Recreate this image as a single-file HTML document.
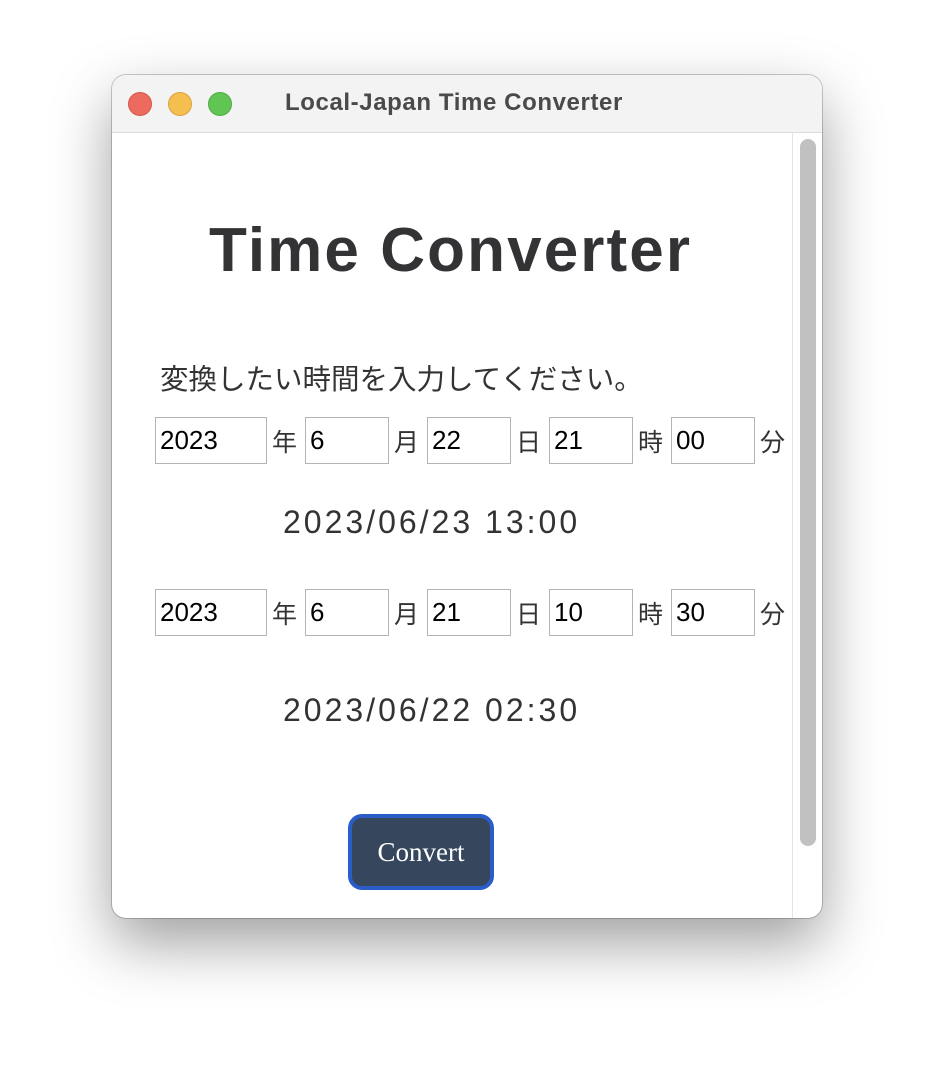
<!DOCTYPE html>
<html><head><meta charset="utf-8"><style>
body{margin:0;width:934px;height:1066px;background:#fff;position:relative;overflow:hidden;font-family:"Liberation Sans","Noto Sans CJK JP",sans-serif}
.win{position:absolute;left:112px;top:75px;width:710px;height:843px;border-radius:14px;background:#fff;box-shadow:0 25px 60px rgba(0,0,0,.38),0 0 0 1px rgba(0,0,0,.2);overflow:hidden}
.tb{position:absolute;left:0;top:0;width:710px;height:57px;background:#f3f3f3;border-bottom:1px solid #dcdcdc}
.dot{position:absolute;top:17px;width:24px;height:24px;border-radius:50%}
.ttl{position:absolute;left:173px;top:14px;font-weight:bold;font-size:24px;letter-spacing:0.6px;color:#4a4a4a;white-space:nowrap}
.a{position:absolute;white-space:nowrap}
.in{position:absolute;border:1px solid #b4b4b4;font-size:26px;line-height:45px;padding-left:4px;box-sizing:border-box;color:#000;height:47px}
.lb{position:absolute;font-size:25px;color:#333}
.res{position:absolute;font-size:32px;letter-spacing:3px;color:#333}
</style></head><body>
<div class="win">
<div class="tb">
<div class="dot" style="left:16px;background:#ed6a5e;border:1px solid #d5574b;box-sizing:border-box"></div>
<div class="dot" style="left:56px;background:#f5bf4f;border:1px solid #d9a23a;box-sizing:border-box"></div>
<div class="dot" style="left:96px;background:#61c554;border:1px solid #4ea940;box-sizing:border-box"></div>
<div class="ttl">Local-Japan Time Converter</div>
</div>
<div style="position:absolute;left:680px;top:58px;width:1px;height:785px;background:#e4e4e4"></div>
<div style="position:absolute;left:688px;top:64px;width:16px;height:707px;border-radius:8px;background:#c1c1c1"></div>
<div class="a" style="left:97px;top:140px;font-size:62px;font-weight:bold;letter-spacing:2.1px;color:#333336">Time Converter</div>
<div class="a" style="left:48px;top:282px;font-size:28.5px;color:#333">変換したい時間を入力してください。</div>
</div>
<div class="in" style="left:155px;top:417px;width:112px">2023</div><div class="lb" style="left:272px;top:423px">年</div>
<div class="in" style="left:305px;top:417px;width:84px">6</div><div class="lb" style="left:394px;top:423px">月</div>
<div class="in" style="left:427px;top:417px;width:84px">22</div><div class="lb" style="left:516px;top:423px">日</div>
<div class="in" style="left:549px;top:417px;width:84px">21</div><div class="lb" style="left:638px;top:423px">時</div>
<div class="in" style="left:671px;top:417px;width:84px">00</div><div class="lb" style="left:760px;top:423px">分</div>
<div class="res" style="left:283px;top:504px">2023/06/23 13:00</div>
<div class="in" style="left:155px;top:589px;width:112px">2023</div><div class="lb" style="left:272px;top:595px">年</div>
<div class="in" style="left:305px;top:589px;width:84px">6</div><div class="lb" style="left:394px;top:595px">月</div>
<div class="in" style="left:427px;top:589px;width:84px">21</div><div class="lb" style="left:516px;top:595px">日</div>
<div class="in" style="left:549px;top:589px;width:84px">10</div><div class="lb" style="left:638px;top:595px">時</div>
<div class="in" style="left:671px;top:589px;width:84px">30</div><div class="lb" style="left:760px;top:595px">分</div>
<div class="res" style="left:283px;top:692px">2023/06/22 02:30</div>
<div style="position:absolute;left:348px;top:814px;width:146px;height:76px;box-sizing:border-box;border:4px solid #2a5dc8;border-radius:14px;background:#36475d;color:#fff;font-family:'Liberation Serif',serif;font-size:27px;text-align:center;line-height:68px">Convert</div>
</body></html>
